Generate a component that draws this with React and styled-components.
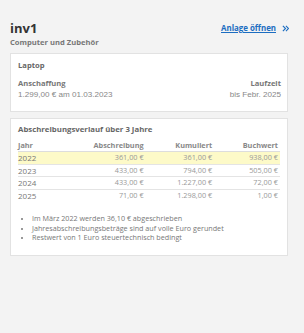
import styled, { createGlobalStyle } from "styled-components";

const GlobalStyle = createGlobalStyle`
  body {
    margin: 0;
    background: #f3f3f3;
    font-family: "Open Sans", "Liberation Sans", sans-serif;
  }
`;

const Page = styled.div`
  padding: 19px 16px 0 10px;
  display: flex;
  flex-direction: column;
`;

const Header = styled.div`
  display: flex;
  justify-content: space-between;
  align-items: flex-start;
`;

const Title = styled.h1`
  margin: 0;
  font-size: 13px;
  line-height: 18px;
  font-weight: 700;
  color: #333;
`;

const Subtitle = styled.div`
  font-size: 7.6px;
  line-height: 11px;
  font-weight: 700;
  color: #777;
`;

const OpenLink = styled.a`
  margin-top: 4px;
  font-size: 7.9px;
  font-weight: 700;
  color: #1c6dc1;
  text-decoration: underline;
  display: flex;
  align-items: center;
  gap: 6px;
  margin-right: -1px;
  cursor: pointer;
`;

const Card = styled.section`
  margin-top: ${(p) => p.$gap || 7}px;
  background: #fff;
  border: 1px solid #e2e2e2;
  padding: ${(p) => p.$pad || "7px 6px 8px 7px"};
`;

const CardTitle = styled.div`
  font-size: ${(p) => p.$size || 7.6}px;
  line-height: 11px;
  font-weight: 700;
  color: #666;
`;

const InfoRow = styled.div`
  display: flex;
  justify-content: space-between;
  margin-top: 7px;
`;

const InfoCol = styled.div`
  display: flex;
  flex-direction: column;
  text-align: ${(p) => (p.$right ? "right" : "left")};
`;

const Label = styled.div`
  font-size: 7.6px;
  line-height: 11px;
  font-weight: 700;
  color: #777;
`;

const Value = styled.div`
  font-family: "Liberation Sans", Arial, sans-serif;
  font-size: 8.1px;
  line-height: 11px;
  color: #888;
`;

const Table = styled.table`
  width: 100%;
  border-collapse: collapse;
  margin-top: 5px;
  font-size: 7.3px;
  color: #888;
`;

const Th = styled.th`
  font-weight: 700;
  color: #888;
  text-align: ${(p) => p.$align || "right"};
  padding: 0 2px 1px 0;
  height: 9px;
  line-height: 10px;
  border-bottom: 1px solid #ddd;
`;

const Tr = styled.tr`
  background: ${(p) => (p.$current ? "#fdfac8" : "transparent")};
`;

const Td = styled.td`
  text-align: ${(p) => p.$align || "right"};
  color: ${(p) => (p.$year ? "#777" : "#999")};
  font-size: ${(p) => (p.$year ? "8px" : "7.3px")};
  height: 11.5px;
  line-height: 11px;
  padding: 0 2px 0 0;
  border-bottom: 1px solid ${(p) => (p.$last ? "transparent" : "#e4e4e4")};
`;

const Notes = styled.ul`
  margin: 12px 0 0;
  padding-left: 14px;
  font-size: 7.2px;
  line-height: 9.7px;
  color: #777;
  li::marker {
    font-size: 6px;
  }
`;

const rows = [
  ["2022", "361,00 €", "361,00 €", "938,00 €"],
  ["2023", "433,00 €", "794,00 €", "505,00 €"],
  ["2024", "433,00 €", "1.227,00 €", "72,00 €"],
  ["2025", "71,00 €", "1.298,00 €", "1,00 €"],
];

function Chevrons() {
  return (
    <svg width="7" height="7" viewBox="0 0 8 8" fill="none" stroke="#1c6dc1" strokeWidth="1.3">
      <path d="M1 1l3 3-3 3M4.5 1l3 3-3 3" />
    </svg>
  );
}

export default function App() {
  return (
    <>
      <GlobalStyle />
      <Page>
        <Header>
          <div>
            <Title>inv1</Title>
            <Subtitle>Computer und Zubehör</Subtitle>
          </div>
          <OpenLink>
            Anlage öffnen <Chevrons />
          </OpenLink>
        </Header>

        <Card $gap={5} $pad="6px 6px 11px 7px">
          <CardTitle>Laptop</CardTitle>
          <InfoRow>
            <InfoCol>
              <Label>Anschaffung</Label>
              <Value>1.299,00 € am 01.03.2023</Value>
            </InfoCol>
            <InfoCol $right>
              <Label>Laufzeit</Label>
              <Value>bis Febr. 2025</Value>
            </InfoCol>
          </InfoRow>
        </Card>

        <Card $gap={6} $pad="5px 7px 12px 7px">
          <CardTitle $size={7.8}>Abschreibungsverlauf über 3 Jahre</CardTitle>
          <Table>
            <thead>
              <tr>
                <Th $align="left">Jahr</Th>
                <Th>Abschreibung</Th>
                <Th>Kumuliert</Th>
                <Th>Buchwert</Th>
              </tr>
            </thead>
            <tbody>
              {rows.map((r, i) => (
                <Tr key={r[0]} $current={i === 0}>
                  <Td $align="left" $year $last={i === rows.length - 1}>
                    {r[0]}
                  </Td>
                  <Td $last={i === rows.length - 1}>{r[1]}</Td>
                  <Td $last={i === rows.length - 1}>{r[2]}</Td>
                  <Td $last={i === rows.length - 1}>{r[3]}</Td>
                </Tr>
              ))}
            </tbody>
          </Table>
          <Notes>
            <li>Im März 2022 werden 36,10 € abgeschrieben</li>
            <li>Jahresabschreibungsbeträge sind auf volle Euro gerundet</li>
            <li>Restwert von 1 Euro steuertechnisch bedingt</li>
          </Notes>
        </Card>
      </Page>
    </>
  );
}
